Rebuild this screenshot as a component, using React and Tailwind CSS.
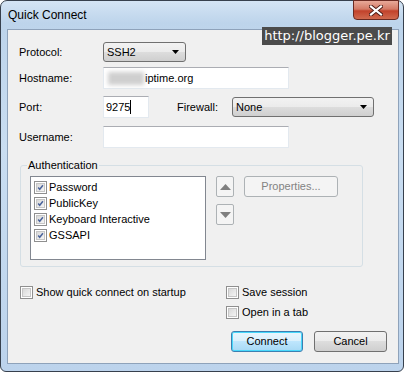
import React from 'react';

const font = { fontFamily: '"Liberation Sans", Arial, sans-serif' };

const CheckBox = ({ checked }) => (
  <div className="w-[13px] h-[13px] border border-[#8f8f8f] bg-white p-[1px] shrink-0">
    <div className="w-full h-full border border-[#c6c6c6] bg-[linear-gradient(135deg,#d9d9d9_0%,#f4f4f4_100%)] flex items-center justify-center">
      {checked && (
        <svg width="9" height="9" viewBox="0 0 9 9">
          <path d="M1.5 4.5 L3.5 6.8 L7.6 1.6" fill="none" stroke="#4a639b" strokeWidth="1.9" />
        </svg>
      )}
    </div>
  </div>
);

const Combo = ({ value, className }) => (
  <div className={`h-[20px] border border-[#707070] rounded-[3px] bg-[linear-gradient(180deg,#f2f2f2_0%,#ebebeb_50%,#dddddd_50%,#cfcfcf_100%)] flex items-center justify-between pl-[3px] pr-[6px] ${className}`}>
    <span className="text-[11px] text-black">{value}</span>
    <svg width="7" height="4" viewBox="0 0 7 4">
      <path d="M0 0 H7 L3.5 4 Z" fill="#000" />
    </svg>
  </div>
);

const Input = ({ className, children }) => (
  <div className={`h-[22px] border border-[#e3e9ef] border-t-[#abadb3] bg-white flex items-center pl-[1px] text-[11px] text-black ${className}`}>
    {children}
  </div>
);

const Button = ({ children, focus, className }) => (
  <div
    className={`h-[21px] rounded-[3px] border flex items-center justify-center text-[11px] text-black ${
      focus
        ? 'border-[#3c7fb1] bg-[linear-gradient(180deg,#eaf6fd_0%,#d9f0fc_50%,#bee6fd_50%,#a7d9f5_100%)] shadow-[inset_0_0_0_1px_#48d8fb]'
        : 'border-[#707070] bg-[linear-gradient(180deg,#f2f2f2_0%,#ebebeb_50%,#dddddd_50%,#cfcfcf_100%)]'
    } ${className}`}
  >
    {children}
  </div>
);

const ArrowButton = ({ up }) => (
  <div className="w-[18px] h-[21px] rounded-[2px] border border-[#adb2b5] bg-[#f4f4f4] flex items-center justify-center">
    <svg width="11" height="6" viewBox="0 0 11 6">
      <path d={up ? 'M0 6 H11 L5.5 0 Z' : 'M0 0 H11 L5.5 6 Z'} fill="#7f7f7f" />
    </svg>
  </div>
);

const App = () => {
  const methods = ['Password', 'PublicKey', 'Keyboard Interactive', 'GSSAPI'];

  return (
    <div className="relative w-[406px] h-[373px] bg-white overflow-hidden" style={font}>
      {/* Window frame */}
      <div className="w-[404px] h-[372px] border border-[#37404d] rounded-t-[7px] rounded-b-[6px] bg-[linear-gradient(180deg,#d4e4f4_0%,#bdd4eb_6%,#c9ddf1_40%,#bcd3ec_100%)] flex flex-col">
        {/* Title bar */}
        <div className="relative h-[28px] flex items-center pl-[7px] shrink-0">
          <span className="text-[12px] text-black">Quick Connect</span>
          <div className="absolute right-[4px] -top-[1px] w-[46px] h-[20px] rounded-b-[4px] border border-[#6b2a22] bg-[linear-gradient(180deg,#e8a999_0%,#d47a66_45%,#c2422b_55%,#d06a4f_100%)] flex items-center justify-center">
            <svg width="14" height="11" viewBox="0 0 14 11">
              <path d="M2 1.5 L12 9.5 M12 1.5 L2 9.5" stroke="#4a1a14" strokeWidth="4" strokeLinecap="square" />
              <path d="M2 1.5 L12 9.5 M12 1.5 L2 9.5" stroke="#ffffff" strokeWidth="2.2" strokeLinecap="square" />
            </svg>
          </div>
        </div>

        {/* Client area */}
        <div className="ml-[6px] mr-[4px] mb-[7px] flex-1 border border-[#8ea2ba] bg-[#f0f0f0] pl-[11px] pt-[11px] text-[11px] text-black">
          {/* Protocol */}
          <div className="flex items-center h-[22px]">
            <span className="w-[84px]">Protocol:</span>
            <Combo value="SSH2" className="w-[83px]" />
          </div>
          {/* Hostname */}
          <div className="flex items-center h-[22px] mt-[4px]">
            <span className="w-[84px]">Hostname:</span>
            <Input className="w-[186px]">
              <div className="w-[36px] h-[13px] ml-[3px] bg-[#cfcfcf] blur-[2px]" />
              <span className="ml-[1px]">iptime.org</span>
            </Input>
          </div>
          {/* Port */}
          <div className="flex items-center h-[22px] mt-[7px]">
            <span className="w-[84px]">Port:</span>
            <Input className="w-[46px]">
              <span className="ml-[1px]">9275</span>
              <span className="w-[1px] h-[14px] bg-black" />
            </Input>
            <span className="ml-[28px] w-[55px]">Firewall:</span>
            <Combo value="None" className="w-[142px]" />
          </div>
          {/* Username */}
          <div className="flex items-center h-[22px] mt-[8px]">
            <span className="w-[84px]">Username:</span>
            <Input className="w-[186px]" />
          </div>

          {/* Authentication group */}
          <div className="relative ml-[1px] mt-[17px] w-[343px] border border-[#d5dfe5] rounded-[3px] pl-[9px] pt-[10px] pb-[6px] flex">
            <span className="absolute -top-[8px] left-[6px] px-[1px] bg-[#f0f0f0] leading-[14px]">Authentication</span>
            <div className="w-[176px] h-[84px] border border-[#828790] bg-white pt-[2px] pl-[3px]">
              {methods.map((m) => (
                <div key={m} className="flex items-center h-[16px] gap-[2px]">
                  <CheckBox checked />
                  <span>{m}</span>
                </div>
              ))}
            </div>
            <div className="ml-[10px] flex flex-col gap-[7px]">
              <ArrowButton up />
              <ArrowButton />
            </div>
            <div className="ml-[10px] w-[94px] h-[21px] rounded-[3px] border border-[#adb2b5] bg-[#f4f4f4] flex items-center justify-center text-[#838383]">
              Properties...
            </div>
          </div>

          {/* Options */}
          <div className="flex mt-[17px]">
            <div className="ml-[1px] w-[206px] flex items-center h-[16px] gap-[3px]">
              <CheckBox />
              <span>Show quick connect on startup</span>
            </div>
            <div className="flex flex-col gap-[4px]">
              <div className="flex items-center h-[16px] gap-[3px]">
                <CheckBox />
                <span>Save session</span>
              </div>
              <div className="flex items-center h-[16px] gap-[3px]">
                <CheckBox />
                <span>Open in a tab</span>
              </div>
            </div>
          </div>

          {/* Buttons */}
          <div className="flex justify-end gap-[11px] mr-[11px] mt-[11px]">
            <Button focus className="w-[72px]">Connect</Button>
            <Button className="w-[73px]">Cancel</Button>
          </div>
        </div>
      </div>

      {/* Watermark */}
      <div
        className="absolute left-[262px] top-[27px] w-[130px] h-[18px] bg-[#4b4b4b] flex items-center justify-center text-white text-[13px]"
        style={{ fontFamily: '"DejaVu Sans", Verdana, sans-serif' }}
      >
        http://blogger.pe.kr
      </div>
    </div>
  );
};

export default App;
